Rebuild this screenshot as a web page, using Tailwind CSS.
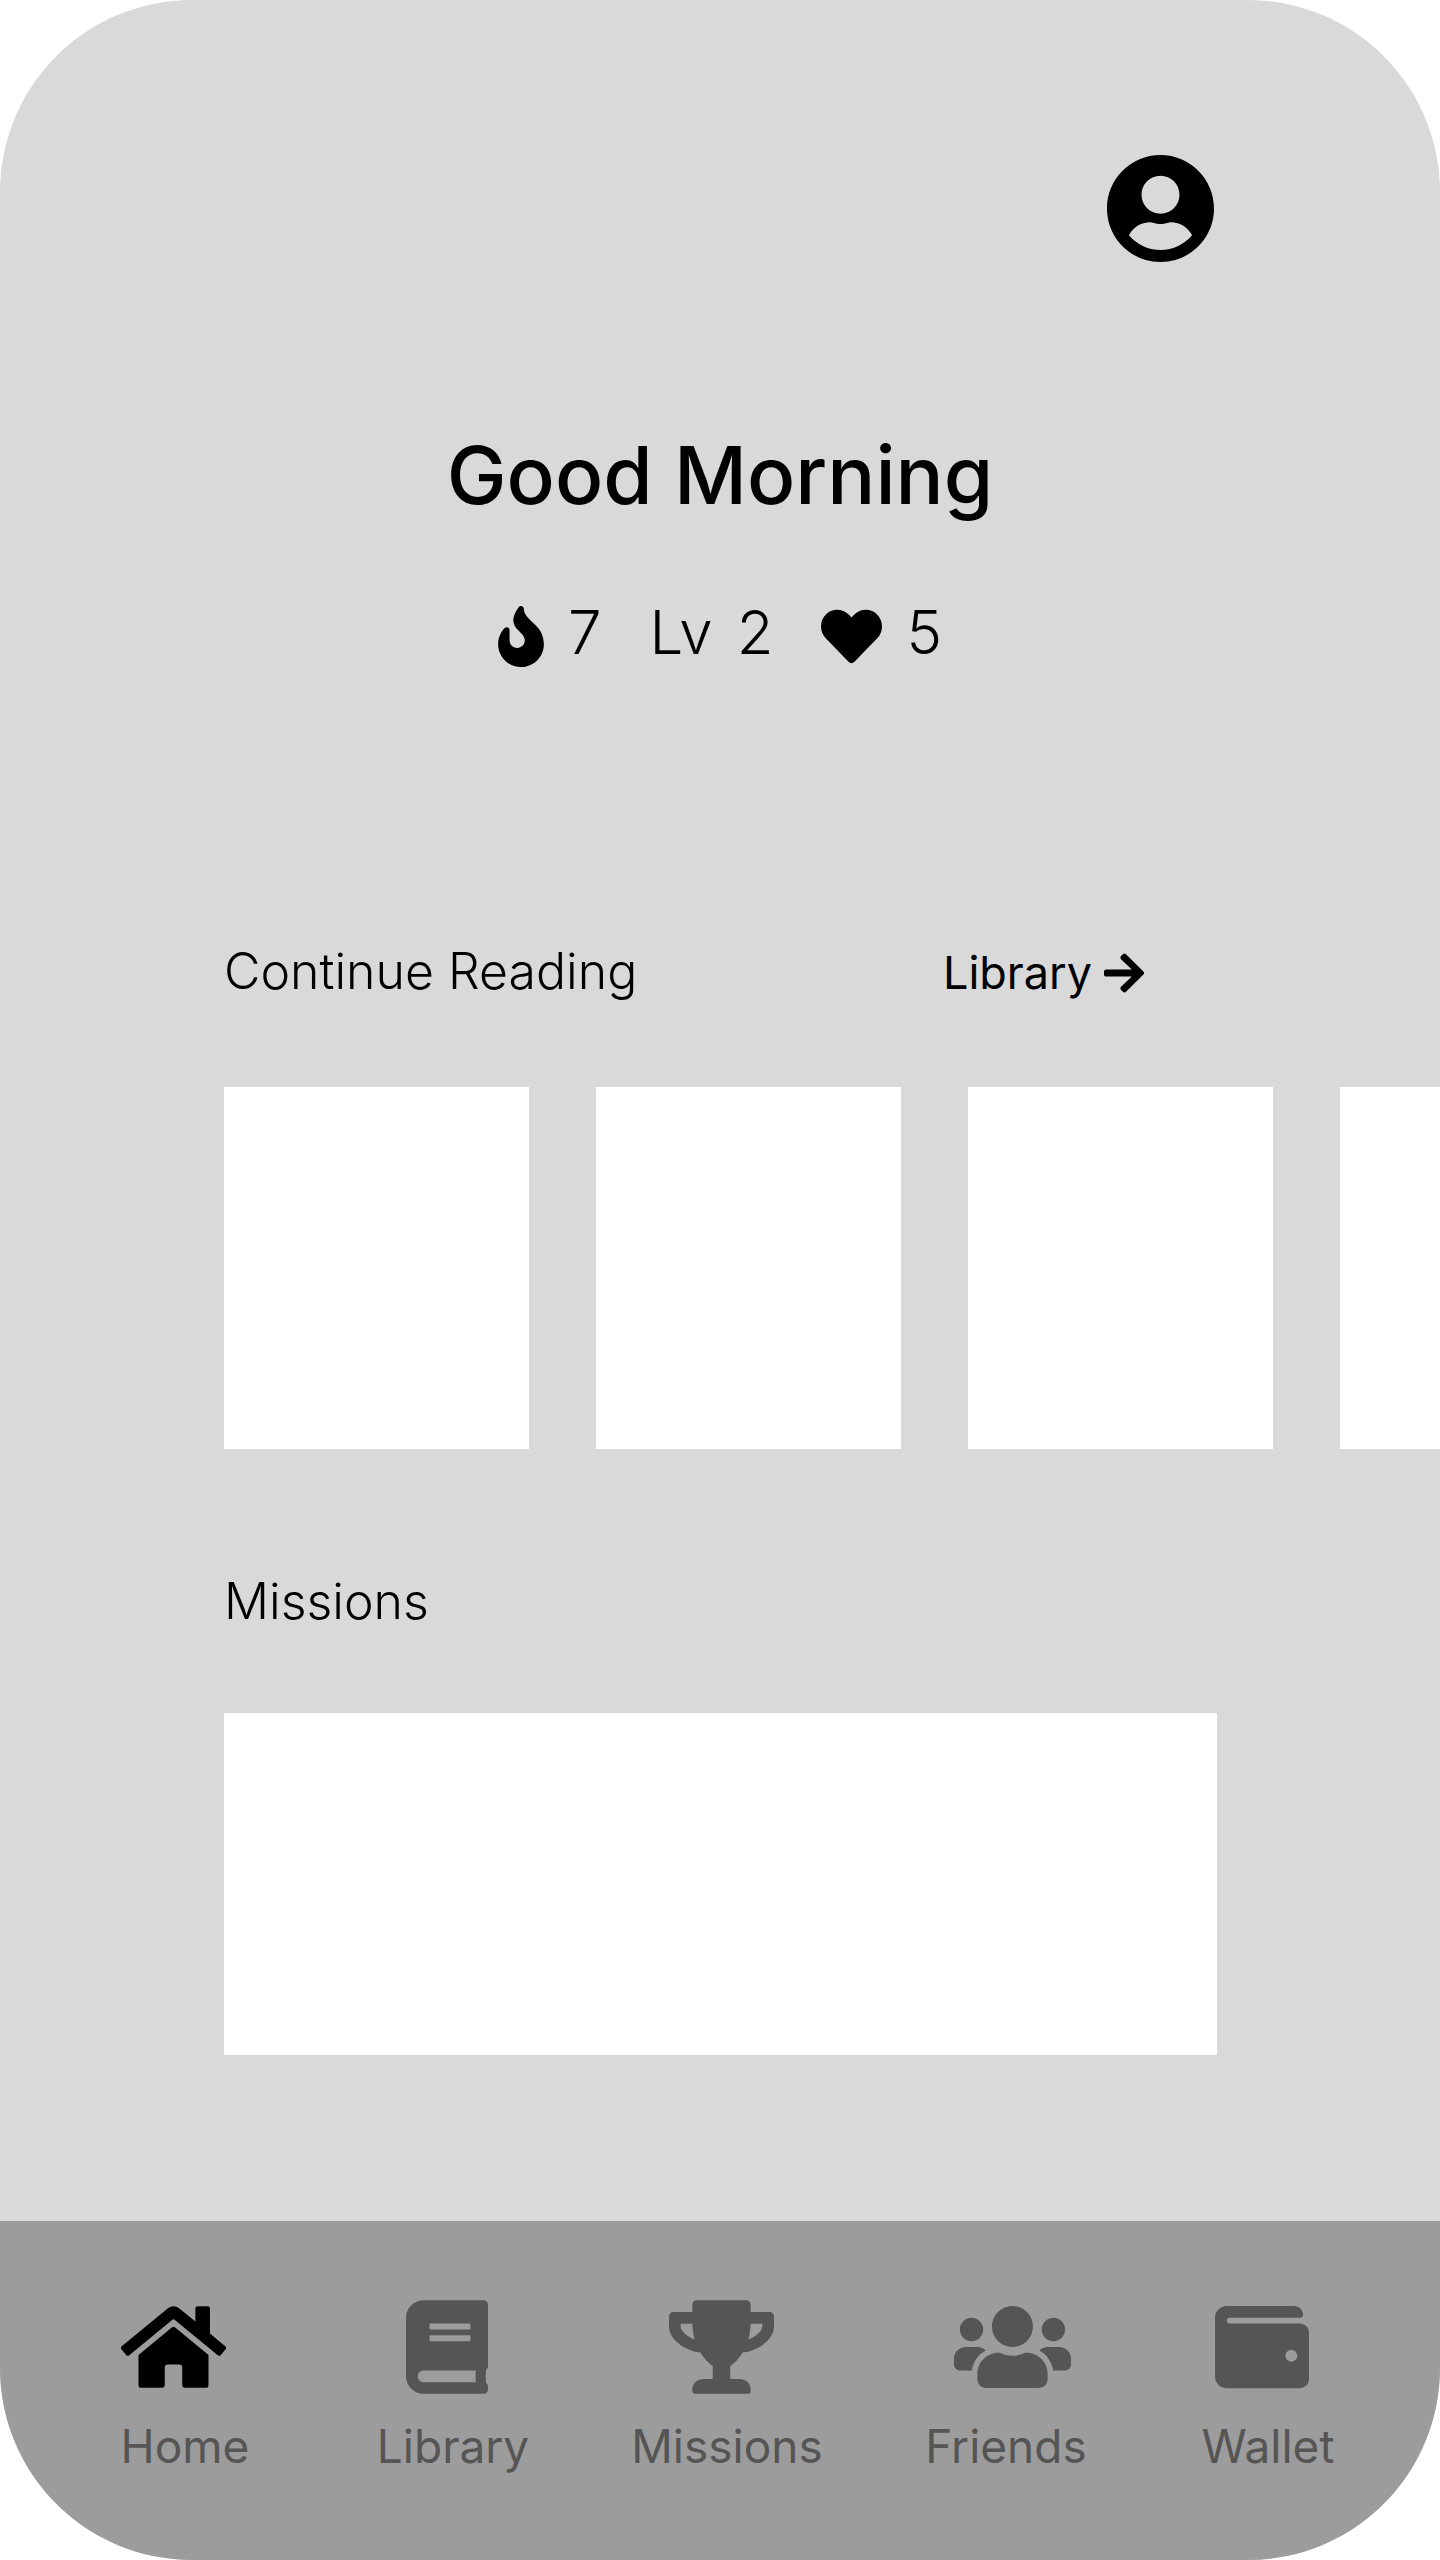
<!DOCTYPE html>
<html lang="en">
<head>
<meta charset="utf-8">
<meta name="viewport" content="width=device-width, initial-scale=1">
<title>Home</title>
<script src="https://cdn.jsdelivr.net/npm/@tailwindcss/browser@4"></script>
</head>
<body class="bg-white font-[Inter,sans-serif] text-black">
<div class="flex min-h-screen flex-col overflow-hidden rounded-[192px] bg-[#d9d9d9]">
  <header class="flex justify-end px-[226px] pt-[155px]">
    <button type="button" aria-label="Profile">
      <svg class="size-[107px]" viewBox="0 8 496 496" fill="currentColor" aria-hidden="true"><path d="M248 8C111 8 0 119 0 256s111 248 248 248 248-111 248-248S385 8 248 8zm0 96c48.6 0 88 39.4 88 88s-39.4 88-88 88-88-39.4-88-88 39.4-88 88-88zm0 344c-58.7 0-111.3-26.6-146.5-68.2 18.8-35.4 55.6-59.8 98.5-59.8 2.4 0 4.8.4 7.1 1.1 13 4.2 26.6 6.9 40.9 6.9 14.3 0 28-2.7 40.9-6.9 2.3-.7 4.7-1.1 7.1-1.1 42.9 0 79.7 24.4 98.5 59.8C359.3 421.4 306.7 448 248 448z"/></svg>
    </button>
  </header>

  <main class="flex-1">
    <h1 class="mt-[165px] text-center text-[80px] leading-24 font-medium">Good Morning</h1>

    <div class="mt-[73px] flex items-center justify-center gap-12 text-[60px] leading-18 font-light">
      <div class="flex items-center gap-6">
        <svg class="h-[61px] w-[46px] translate-y-1" viewBox="0 0 384 512" fill="currentColor" role="img" aria-label="Streak"><path d="M216 23.86c0-23.8-30.65-32.77-44.15-13.04C48 191.85 224 200 224 288c0 35.63-29.11 64.46-64.85 63.99-35.17-.45-63.15-29.77-63.15-64.94v-85.51c0-21.7-26.47-32.23-41.43-16.5C27.8 213.16 0 261.33 0 320c0 105.87 86.13 192 192 192s192-86.13 192-192c0-170.29-168-193-168-296.14z"/></svg>
        <span>7</span>
      </div>
      <div class="flex gap-6"><span>Lv</span><span>2</span></div>
      <div class="flex items-center gap-6">
        <svg class="size-[61px] translate-y-1" viewBox="0 0 512 512" fill="currentColor" role="img" aria-label="Lives"><path d="M462.3 62.6C407.5 15.9 326 24.3 275.7 76.2L256 96.5l-19.7-20.3C186.1 24.3 104.5 15.9 49.7 62.6c-62.8 53.6-66.1 149.8-9.9 207.9l193.5 199.8c12.5 12.9 32.8 12.9 45.3 0l193.5-199.8c56.3-58.1 53-154.3-9.8-207.9z"/></svg>
        <span>5</span>
      </div>
    </div>

    <section class="mt-[273px]">
      <div class="flex items-baseline justify-between pr-[296px] pl-56">
        <h2 class="text-[50px] leading-15 font-light">Continue Reading</h2>
        <a href="#library" class="flex items-center gap-3 text-[45px] leading-15">Library
          <svg class="size-10" viewBox="0 32 448 448" fill="currentColor" aria-hidden="true"><path d="M190.5 66.9l22.2-22.2c9.4-9.4 24.6-9.4 33.9 0L441 239c9.4 9.4 9.4 24.6 0 33.9L246.6 467.3c-9.4 9.4-24.6 9.4-33.9 0l-22.2-22.2c-9.5-9.5-9.3-25 .4-34.3L311.4 296H24c-13.3 0-24-10.7-24-24v-32c0-13.3 10.7-24 24-24h287.4L190.9 101.2c-9.8-9.3-10-24.8-.4-34.3z"/></svg>
        </a>
      </div>
      <ul class="mt-[84px] flex gap-[67px] overflow-hidden pl-56">
        <li class="h-[362px] w-[305px] shrink-0 bg-white"></li>
        <li class="h-[362px] w-[305px] shrink-0 bg-white"></li>
        <li class="h-[362px] w-[305px] shrink-0 bg-white"></li>
        <li class="h-[362px] w-[305px] shrink-0 bg-white"></li>
      </ul>
    </section>

    <section class="mt-[122px] pr-[223px] pl-56">
      <h2 class="text-[50px] leading-15 font-light">Missions</h2>
      <div class="mt-[82px] h-[342px] bg-white"></div>
    </section>
  </main>

  <nav class="mt-[166px] grid grid-cols-[274fr_262fr_286fr_272fr_252fr] justify-items-center bg-[#9c9c9c] pt-[79px] pr-[46px] pb-[86px] pl-12 text-[46px] leading-14 text-[#555]">
    <a href="#home" aria-current="page" class="flex flex-col items-start gap-6">
      <svg class="h-[94px] w-[105px] text-black" viewBox="0 0 576 512" fill="currentColor" aria-hidden="true"><path d="M280.37 148.26L96 300.11V464a16 16 0 0 0 16 16l112.06-.29a16 16 0 0 0 15.92-16V368a16 16 0 0 1 16-16h64a16 16 0 0 1 16 16v95.64a16 16 0 0 0 16 16.05L464 480a16 16 0 0 0 16-16V300L295.67 148.26a12.19 12.19 0 0 0-15.3 0zM571.6 251.47L488 182.56V44.05a12 12 0 0 0-12-12h-56a12 12 0 0 0-12 12v72.61L318.47 43a48 48 0 0 0-61 0L4.34 251.47a12 12 0 0 0-1.6 16.9l25.5 31A12 12 0 0 0 45.15 301l235.22-193.74a12.19 12.19 0 0 1 15.3 0L530.9 301a12 12 0 0 0 16.9-1.6l25.5-31a12 12 0 0 0-1.7-16.93z"/></svg>
      <span>Home</span>
    </a>
    <a href="#library" class="flex flex-col items-center gap-6">
      <svg class="mr-3 h-[94px] w-[82px]" viewBox="0 0 448 512" fill="currentColor" aria-hidden="true"><path d="M448 360V24c0-13.3-10.7-24-24-24H96C43 0 0 43 0 96v320c0 53 43 96 96 96h328c13.3 0 24-10.7 24-24v-16c0-7.5-3.5-14.3-8.9-18.7-4.2-15.4-4.2-59.3 0-74.7 5.4-4.3 8.9-11.1 8.9-18.6zM128 134c0-3.3 2.7-6 6-6h212c3.3 0 6 2.7 6 6v20c0 3.3-2.7 6-6 6H134c-3.3 0-6-2.7-6-6v-20zm0 64c0-3.3 2.7-6 6-6h212c3.3 0 6 2.7 6 6v20c0 3.3-2.7 6-6 6H134c-3.3 0-6-2.7-6-6v-20zm253.4 250H96c-17.7 0-32-14.3-32-32 0-17.6 14.4-32 32-32h285.4c-1.9 17.1-1.9 46.9 0 64z"/></svg>
      <span>Library</span>
    </a>
    <a href="#missions" class="flex flex-col items-center gap-6">
      <svg class="mr-3 h-[94px] w-[105px]" viewBox="0 0 576 512" fill="currentColor" aria-hidden="true"><path d="M552 64H448V24c0-13.3-10.7-24-24-24H152c-13.3 0-24 10.7-24 24v40H24C10.7 64 0 74.7 0 88v56c0 35.7 22.5 72.4 61.9 100.7 31.5 22.7 69.8 37.1 110 41.7C203.3 338.5 240 360 240 360v72h-48c-35.3 0-64 20.7-64 56v12c0 6.6 5.4 12 12 12h296c6.6 0 12-5.4 12-12v-12c0-35.3-28.7-56-64-56h-48v-72s36.7-21.5 68.1-73.6c40.3-4.6 78.6-19 110-41.7 39.3-28.3 61.9-65 61.9-100.7V88c0-13.3-10.7-24-24-24zM99.3 192.8C74.9 175.2 64 155.6 64 144v-16h64.2c1 32.6 5.8 61.2 12.8 86.2-15.1-5.2-29.2-12.4-41.7-21.4zM512 144c0 16.1-17.7 36.1-35.3 48.8-12.5 9-26.7 16.2-41.8 21.4 7-25 11.8-53.6 12.8-86.2H512v16z"/></svg>
      <span>Missions</span>
    </a>
    <a href="#friends" class="flex flex-col items-center gap-6">
      <svg class="ml-3 h-[94px] w-[117px]" viewBox="0 0 640 512" fill="currentColor" aria-hidden="true"><path d="M96 224c35.3 0 64-28.7 64-64s-28.7-64-64-64-64 28.7-64 64 28.7 64 64 64zm448 0c35.3 0 64-28.7 64-64s-28.7-64-64-64-64 28.7-64 64 28.7 64 64 64zm32 32h-64c-17.6 0-33.5 7.1-45.1 18.6 40.3 22.1 68.9 62 75.1 109.4h66c17.7 0 32-14.3 32-32v-32c0-35.3-28.7-64-64-64zm-256 0c61.9 0 112-50.1 112-112S381.9 32 320 32 208 82.1 208 144s50.1 112 112 112zm76.8 32h-8.3c-20.8 10-43.9 16-68.5 16s-47.6-6-68.5-16h-8.3C179.6 288 128 339.6 128 403.2V432c0 26.5 21.5 48 48 48h288c26.5 0 48-21.5 48-48v-28.8c0-63.6-51.6-115.2-115.2-115.2zm-223.7-13.4C161.5 263.1 145.6 256 128 256H64c-35.3 0-64 28.7-64 64v32c0 17.7 14.3 32 32 32h65.9c6.3-47.4 34.9-87.3 75.2-109.4z"/></svg>
      <span>Friends</span>
    </a>
    <a href="#wallet" class="flex flex-col items-center gap-6">
      <svg class="mr-3 size-[94px]" viewBox="0 0 512 512" fill="currentColor" aria-hidden="true"><path d="M461.2 128H80c-8.84 0-16-7.16-16-16s7.16-16 16-16h384c8.84 0 16-7.16 16-16 0-26.51-21.49-48-48-48H64C28.65 32 0 60.65 0 96v320c0 35.35 28.65 64 64 64h397.2c28.02 0 50.8-21.53 50.8-48V176c0-26.47-22.78-48-50.8-48zM416 336c-17.67 0-32-14.33-32-32s14.33-32 32-32 32 14.33 32 32-14.33 32-32 32z"/></svg>
      <span>Wallet</span>
    </a>
  </nav>
</div>
</body>
</html>
